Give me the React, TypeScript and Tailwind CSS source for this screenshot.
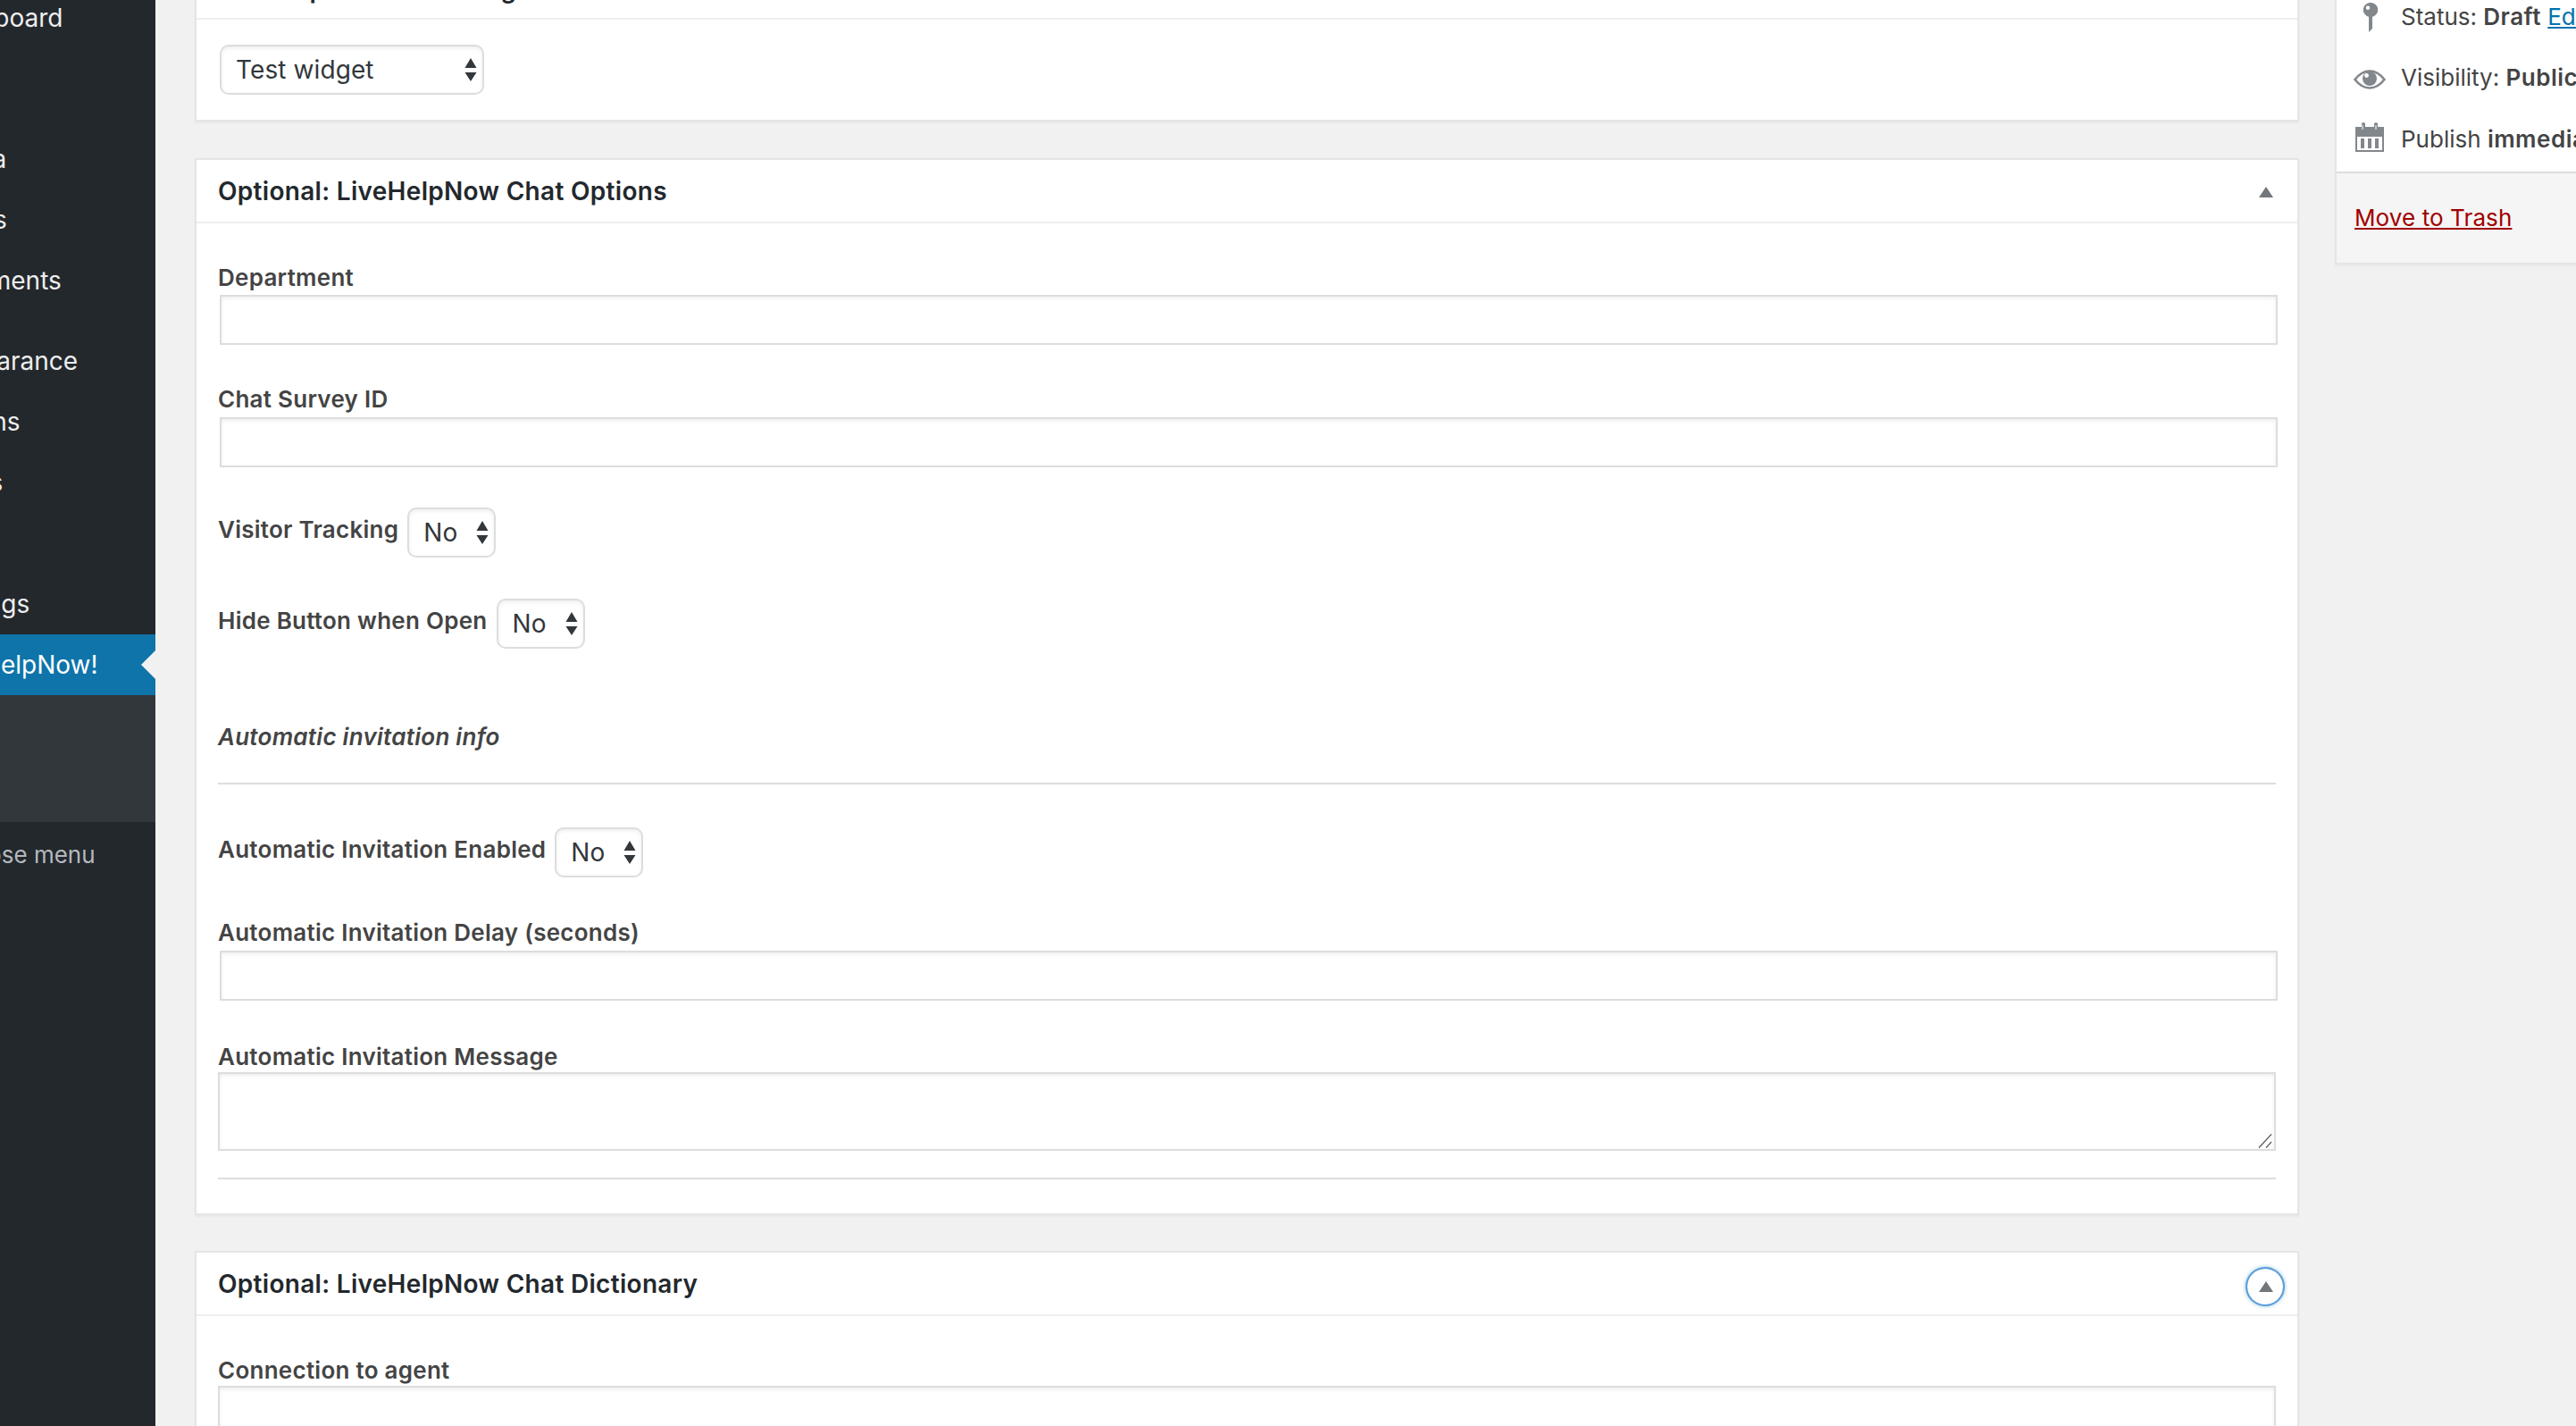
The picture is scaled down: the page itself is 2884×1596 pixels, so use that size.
import React from "react";

const menuRows: { name: string; gap?: number }[] = [
  { name: "Dashboard" },
  { name: "Posts", gap: 22 },
  { name: "Media" },
  { name: "Pages" },
  { name: "Comments" },
  { name: "Appearance", gap: 22 },
  { name: "Plugins" },
  { name: "Users" },
  { name: "Tools" },
  { name: "Settings" },
];

function Arrows() {
  return (
    <svg className="absolute right-[8px] top-1/2 -translate-y-1/2 w-[14px] h-[26px]" viewBox="0 0 14 26">
      <path d="M7 0 L13.5 11 L0.5 11 Z M0.5 16 L13.5 16 L7 26 Z" fill="#32373c" />
    </svg>
  );
}

function Sel({ value, w }: { value: string; w: string }) {
  return (
    <div className={`relative h-[56px] shrink-0 ${w}`}>
      <select
        defaultValue={value}
        className="appearance-none w-full h-full bg-white border-2 border-[#dddddd] rounded-[10px] pl-[16px] text-[28px] tracking-[0.1px] text-[#32373c] [font-family:Inter,sans-serif] shadow-[inset_0_2px_4px_rgba(0,0,0,0.07)]"
      >
        <option>{value}</option>
      </select>
      <Arrows />
    </div>
  );
}

function Label({ children }: { children: React.ReactNode }) {
  return <div className="h-[36px] pb-[3px] flex items-center text-[26px] font-semibold text-[#444444] tracking-[0.26px] whitespace-nowrap">{children}</div>;
}

function TextInput() {
  return (
    <input
      type="text"
      className="block ml-[2px] w-[2304px] h-[56px] shrink-0 bg-white border-2 border-[#dddddd] shadow-[inset_0_2px_4px_rgba(0,0,0,0.07)]"
    />
  );
}

function Toggle({ focus }: { focus?: boolean }) {
  return (
    <div
      className={`absolute right-[16px] top-[18px] w-[40px] h-[40px] rounded-full flex items-center justify-center ${focus ? "shadow-[0_0_0_2px_#5b9dd9,0_0_4px_2px_rgba(30,140,190,0.5)]" : "pb-[5px]"}`}
    >
      <svg className="w-[16px] h-[12px] ml-[2px]" viewBox="0 0 16 12">
        <path d="M8 0 L16 12 L0 12 Z" fill="#72777c" />
      </svg>
    </div>
  );
}

function CardHeader({ title, focus }: { title: string; focus?: boolean }) {
  return (
    <div className="relative h-[69px] pl-[24px] flex items-center border-b-2 border-[#eeeeee] box-content">
      <h2 className="text-[28px] font-semibold text-[#23282d] tracking-[0.3px] whitespace-nowrap">{title}</h2>
      <Toggle focus={focus} />
    </div>
  );
}

function Card({ children, className = "" }: { children: React.ReactNode; className?: string }) {
  return <section className={`bg-white border-2 border-[#e5e5e5] shadow-[0_2px_2px_rgba(0,0,0,0.04)] ${className}`}>{children}</section>;
}

function Bold({ children }: { children: React.ReactNode }) {
  return <b className="font-semibold tracking-[0.5px]">{children}</b>;
}

export default function App() {
  return (
    <div className="flex w-[2884px] h-[1596px] overflow-hidden bg-[#f1f1f1] [font-family:Inter,sans-serif]">
      {/* Admin menu, scrolled off to the left */}
      <aside className="relative w-[174px] h-full shrink-0 bg-[#23282d] overflow-hidden flex flex-col">
        <nav className="-mt-[14px] flex flex-col">
          {menuRows.map((r) => (
            <div
              key={r.name}
              className="h-[68px] shrink-0 flex items-center text-[28px] text-[#eeeeee] -ml-[74px] whitespace-nowrap"
              style={{ marginTop: r.gap ?? 0 }}
            >
              {r.name}
            </div>
          ))}
          <div className="relative h-[68px] shrink-0 bg-[#0e74a9] flex items-center text-[28px] text-white whitespace-nowrap">
            <span className="-ml-[74px]">LiveHelpNow!</span>
            <svg className="absolute right-0 top-[18px] w-[16px] h-[32px]" viewBox="0 0 16 32">
              <path d="M16 0 L0 16 L16 32 Z" fill="#f1f1f1" />
            </svg>
          </div>
          <div className="h-[142px] shrink-0 bg-[#32373c]" />
          <div className="h-[72px] shrink-0 flex items-center text-[26px] text-[#b4b9be] -ml-[76px] whitespace-nowrap">Collapse menu</div>
        </nav>
      </aside>

      {/* Main column */}
      <main className="w-[2356px] ml-[44px] shrink-0 flex flex-col">
        <Card className="-mt-[52px] shrink-0">
          <div className="relative h-[72px] pl-[24px] pt-[6px] flex items-center border-b-2 border-[#eeeeee] box-border">
            <h2 className="text-[28px] font-semibold text-[#23282d] tracking-[0.3px] whitespace-nowrap">LiveHelpNow Chat Widget</h2>
          </div>
          <div className="pl-[26px] pt-[28px] pb-[28px]">
            <Sel value="Test widget" w="w-[296px]" />
          </div>
        </Card>

        <Card className="mt-[41px] shrink-0">
          <CardHeader title="Optional: LiveHelpNow Chat Options" />
          <div className="pl-[24px] flex flex-col">
            <div className="mt-[44px]"><Label>Department</Label></div>
            <div><TextInput /></div>
            <div className="mt-[44px]"><Label>Chat Survey ID</Label></div>
            <div className="mt-[1px]"><TextInput /></div>
            <div className="mt-[45px] flex items-center gap-[10px] h-[56px]">
              <div className="pb-[4px]"><Label>Visitor Tracking</Label></div>
              <Sel value="No" w="w-[99px]" />
            </div>
            <div className="mt-[46px] flex items-center gap-[10px] h-[56px]">
              <div className="pb-[4px]"><Label>Hide Button when Open</Label></div>
              <Sel value="No" w="w-[99px]" />
            </div>
            <div className="mt-[82px]"><Label><em>Automatic invitation info</em></Label></div>
            <hr className="mt-[32px] w-[2304px] border-0 border-t-2 border-[#dddddd]" />
            <div className="mt-[48px] flex items-center gap-[10px] h-[56px]">
              <div className="pb-[4px]"><Label>Automatic Invitation Enabled</Label></div>
              <Sel value="No" w="w-[99px]" />
            </div>
            <div className="mt-[45px]"><Label>Automatic Invitation Delay (seconds)</Label></div>
            <div className="mt-[1px]"><TextInput /></div>
            <div className="mt-[48px] h-[32px] flex items-center"><Label>Automatic Invitation Message</Label></div>
            <div className="relative w-[2304px] h-[88px]">
              <textarea className="block w-full h-full resize-none bg-white border-2 border-[#dddddd] shadow-[inset_0_2px_4px_rgba(0,0,0,0.07)]" />
              <svg className="absolute right-[4px] bottom-[3px] w-[16px] h-[16px]" viewBox="0 0 16 16">
                <path d="M1 15.5 L15 0.5 M9 15.5 L15 9" stroke="#555" strokeWidth="1.2" fill="none" />
              </svg>
            </div>
            <hr className="mt-[30px] w-[2304px] border-0 border-t-2 border-[#dddddd]" />
            <div className="h-[38px]" />
          </div>
        </Card>

        <Card className="mt-[40px] shrink-0">
          <CardHeader title="Optional: LiveHelpNow Chat Dictionary" focus />
          <div className="pl-[24px] flex flex-col">
            <div className="mt-[44px]"><Label>Connection to agent</Label></div>
            <input type="text" className="block -mt-[2px] w-[2304px] h-[56px] shrink-0 bg-white border-2 border-[#dddddd] shadow-[inset_0_2px_4px_rgba(0,0,0,0.07)]" />
          </div>
        </Card>
      </main>

      {/* Publish box */}
      <aside className="ml-[40px] flex-1 min-w-0">
        <div className="-mt-[16px] bg-white border-2 border-r-0 border-t-0 border-[#e5e5e5] shadow-[0_2px_2px_rgba(0,0,0,0.04)]">
          <div className="h-[208px] pt-0 flex flex-col text-[26px] text-[#444444] whitespace-nowrap">
            <div className="h-[68px] flex items-center shrink-0">
              <div className="w-[72px] flex justify-center shrink-0 pl-[4px]">
                <svg className="w-[16px] h-[33px] mt-[3px]" viewBox="0 0 16 33">
                  <path fillRule="evenodd" d="M8 0 A8 8 0 0 1 10 15.8 L10 29 L6 33 L6 15.8 A8 8 0 0 1 8 0 Z M5 3.5 A2.2 2.2 0 1 0 5 7.9 A2.2 2.2 0 1 0 5 3.5 Z" fill="#82878c" />
                </svg>
              </div>
              <span>Status: <Bold>Draft</Bold> <span className="text-[#0073aa] underline">Edit</span></span>
            </div>
            <div className="h-[69px] flex items-center shrink-0">
              <div className="w-[72px] flex justify-center shrink-0 pl-[2px]">
                <svg className="w-[36px] h-[22px] mt-[5px]" viewBox="0 0 36 22">
                  <path d="M1.5 11 C7 4 12 1.5 18 1.5 C24 1.5 29 4 34.5 11 C29 18 24 20.5 18 20.5 C12 20.5 7 18 1.5 11 Z" fill="none" stroke="#82878c" strokeWidth="2.6" />
                  <circle cx="18" cy="10" r="8" fill="#82878c" />
                  <circle cx="14.5" cy="6.5" r="2.4" fill="#ffffff" />
                </svg>
              </div>
              <span>Visibility: <Bold>Public</Bold> <span className="text-[#0073aa] underline">Edit</span></span>
            </div>
            <div className="h-[68px] flex items-center shrink-0">
              <div className="w-[72px] flex justify-center shrink-0 pl-[2px]">
                <svg className="w-[32px] h-[33px] mb-[3px]" viewBox="0 0 32 33">
                  <path fillRule="evenodd" d="M0 5 H7 V2 A2 2 0 0 1 11 2 V5 H21 V2 A2 2 0 0 1 25 2 V5 H32 V33 H0 Z M2 16 V31 H30 V16 Z" fill="#82878c" />
                  <path d="M6 18 H10 V29 H6 Z M14 18 H18 V29 H14 Z M22 18 H26 V29 H22 Z" fill="#82878c" />
                  <path d="M8 3 V8 M23 3 V8" stroke="#ffffff" strokeWidth="1" />
                </svg>
              </div>
              <span>Publish <Bold>immediately</Bold> <span className="text-[#0073aa] underline">Edit</span></span>
            </div>
          </div>
          <div className="h-[102px] bg-[#f5f5f5] border-t-2 border-[#dddddd] pl-[20px] flex items-center box-border">
            <span className="text-[26px] text-[#a00000] underline tracking-[0.1px] pb-[2px]">Move to Trash</span>
          </div>
        </div>
      </aside>
    </div>
  );
}
